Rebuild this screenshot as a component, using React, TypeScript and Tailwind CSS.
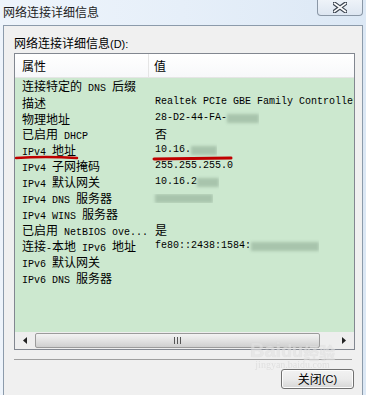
import React from 'react';

// Split text into ascii / cjk runs so ascii renders at the bitmap 6px width
const Mixed = ({ text }: { text: string }) => {
    const parts = text.split(/([\x00-\x7f]+)/).filter(Boolean);
    return (
        <>
            {parts.map((p, i) =>
                /^[\x00-\x7f]+$/.test(p) ? (
                    <span key={i} className="font-['Liberation_Mono',monospace] text-[10px] whitespace-pre">{p}</span>
                ) : (
                    <span key={i} className="text-[12px]">{p}</span>
                )
            )}
        </>
    );
};

const Blur = ({ w, tone = "bg-[#a8c4ac]" }: { w: number; tone?: string }) => (
    <span className={`inline-block h-[9px] align-middle blur-[1.5px] ${tone}`} style={{ width: w }} />
);

const rows: { k: string; v?: string; blur?: number }[] = [
    { k: "连接特定的 DNS 后缀" },
    { k: "描述", v: "Realtek PCIe GBE Family Controller" },
    { k: "物理地址", v: "28-D2-44-FA-", blur: 32 },
    { k: "已启用 DHCP", v: "否" },
    { k: "IPv4 地址", v: "10.16.", blur: 26 },
    { k: "IPv4 子网掩码", v: "255.255.255.0" },
    { k: "IPv4 默认网关", v: "10.16.2", blur: 22 },
    { k: "IPv4 DNS 服务器", blur: 58 },
    { k: "IPv4 WINS 服务器" },
    { k: "已启用 NetBIOS ove...", v: "是" },
    { k: "连接-本地 IPv6 地址", v: "fe80::2438:1584:", blur: 68 },
    { k: "IPv6 默认网关" },
    { k: "IPv6 DNS 服务器" },
];

export default function App() {
    return (
        <div className="relative flex h-[395px] w-[366px] flex-col overflow-hidden bg-gradient-to-r from-[#eef4fb] via-[#e6eff9] to-[#dce8f5] font-['Noto_Sans_CJK_SC',sans-serif] text-[#000]">
            {/* title bar */}
            <div className="flex h-[25px] shrink-0 items-start justify-between pl-[3px] pr-[3px]">
                <div className="pt-[4px] text-[12px] leading-[16px] text-[#1e1e1e]">网络连接详细信息</div>
                <div className="flex h-[16px] w-[46px] items-center justify-center rounded-b-[4px] border border-t-0 border-[#8a97a6] bg-gradient-to-b from-[#eef3f9] to-[#dde6f1]">
                    <svg width="14" height="11" viewBox="0 0 14 11">
                        <path d="M1.5 1.5 L12.5 9.5 M12.5 1.5 L1.5 9.5" stroke="#3d4652" strokeWidth="4" strokeLinecap="square" />
                        <path d="M1.5 1.5 L12.5 9.5 M12.5 1.5 L1.5 9.5" stroke="#ffffff" strokeWidth="1.6" strokeLinecap="square" />
                    </svg>
                </div>
            </div>

            {/* dialog body */}
            <div className="mx-[3px] flex flex-1 flex-col border border-b-0 border-[#8c9bab] bg-[#f0f0f0] pl-[10px] pr-[7px] pt-[9px]">
                <div className="text-[12px] leading-[16px] text-[#000]">
                    网络连接详细信息<span className="font-['Liberation_Sans',sans-serif] text-[11px]">(D):</span>
                </div>

                {/* list view */}
                <div className="mt-[1px] flex h-[297px] flex-col border border-[#828790] bg-[#cce8cf]">
                    <div className="flex h-[24px] shrink-0 border-b border-[#e5e5e5] bg-gradient-to-b from-[#ffffff] to-[#f7f8fa] text-[12px]">
                        <div className="flex w-[134px] items-center border-r border-[#e5e5e5] pl-[7px]">属性</div>
                        <div className="flex items-center pl-[5px]">值</div>
                    </div>

                    <div className="flex-1 overflow-hidden">
                        {rows.map((r, i) => (
                            <div key={i} className="flex h-[16px] items-center whitespace-nowrap leading-[16px]">
                                <div className="w-[134px] shrink-0 overflow-hidden pl-[7px]"><Mixed text={r.k} /></div>
                                <div className="flex items-center overflow-hidden pl-[6px]">
                                    {r.v && <Mixed text={r.v} />}
                                    {r.blur && <Blur w={r.blur} />}
                                </div>
                            </div>
                        ))}
                    </div>

                    {/* horizontal scrollbar */}
                    <div className="flex h-[17px] shrink-0 items-center bg-[#eeeeee]">
                        <div className="flex h-full w-[20px] items-center justify-center">
                            <svg width="4" height="7" viewBox="0 0 4 7"><path d="M4 0 L0 3.5 L4 7 Z" fill="#222" /></svg>
                        </div>
                        <div className="flex h-[15px] w-[285px] items-center justify-center rounded-[2px] border border-[#9b9b9b] bg-gradient-to-b from-[#f3f3f3] via-[#e2e2e2] to-[#cfcfcf]">
                            <svg width="7" height="7" viewBox="0 0 7 7">
                                <path d="M0.5 0 V7 M3.5 0 V7 M6.5 0 V7" stroke="#555" strokeWidth="1" />
                            </svg>
                        </div>
                        <div className="flex h-full flex-1 items-center justify-end pr-[8px]">
                            <svg width="4" height="7" viewBox="0 0 4 7"><path d="M0 0 L4 3.5 L0 7 Z" fill="#222" /></svg>
                        </div>
                    </div>
                </div>

                {/* separator */}
                <div className="mr-[3px] mt-[9px] h-[2px] border-t border-[#a0a0a0] border-b-white" />

                <div className="mt-[8px] flex justify-end pr-[1px]">
                    <button className="flex h-[20px] w-[73px] items-center justify-center rounded-[3px] border border-[#707070] bg-gradient-to-b from-[#f2f2f2] via-[#ebebeb] to-[#d6d6d6] text-[12px] leading-none shadow-[inset_0_0_0_1px_#fcfcfc]">
                        关闭<span className="font-['Liberation_Sans',sans-serif] text-[11px]">(C)</span>
                    </button>
                </div>
            </div>

            {/* red marks over the IPv4 row */}
            <svg className="pointer-events-none absolute left-[15px] top-[155px]" width="220" height="8" viewBox="0 0 220 8">
                <path d="M1 3 Q 30 1 62 3" stroke="#c00000" strokeWidth="2.5" fill="none" strokeLinecap="round" />
                <path d="M139 4 Q 175 3.5 216 3" stroke="#c00000" strokeWidth="3" fill="none" strokeLinecap="round" />
            </svg>

            {/* watermark */}
            <div className="pointer-events-none absolute left-[250px] top-[340px] flex flex-col items-center opacity-60">
                <div className="flex items-end font-['Liberation_Sans',sans-serif] text-[20px] font-bold leading-none text-[#e2e2e2] [text-shadow:0_0_1px_#c8c8c8]">
                    Bai<span className="text-[18px]">du</span><span className="font-['Noto_Sans_CJK_SC',sans-serif] text-[16px]">经验</span>
                </div>
                <div className="font-['Liberation_Serif',serif] text-[10px] leading-none text-[#d4d4d4]">jingyan.baidu.com</div>
            </div>
        </div>
    );
}
